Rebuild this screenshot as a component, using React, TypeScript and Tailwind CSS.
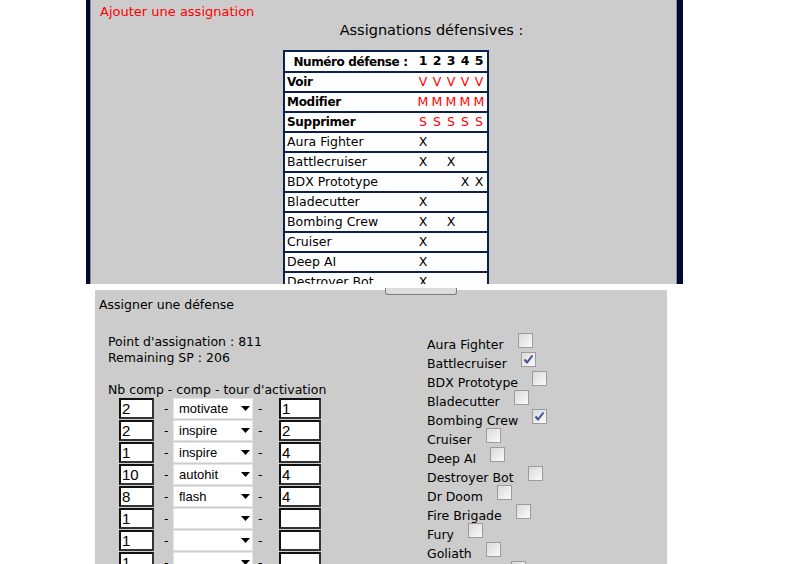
import React from "react";

const NAVY = "border-[#0b2250]";

type Row = { label: string; bold?: boolean; marks: string[]; red?: boolean };

const tableRows: Row[] = [
  { label: "Voir", bold: true, red: true, marks: ["V", "V", "V", "V", "V"] },
  { label: "Modifier", bold: true, red: true, marks: ["M", "M", "M", "M", "M"] },
  { label: "Supprimer", bold: true, red: true, marks: ["S", "S", "S", "S", "S"] },
  { label: "Aura Fighter", marks: ["X", "", "", "", ""] },
  { label: "Battlecruiser", marks: ["X", "", "X", "", ""] },
  { label: "BDX Prototype", marks: ["", "", "", "X", "X"] },
  { label: "Bladecutter", marks: ["X", "", "", "", ""] },
  { label: "Bombing Crew", marks: ["X", "", "X", "", ""] },
  { label: "Cruiser", marks: ["X", "", "", "", ""] },
  { label: "Deep AI", marks: ["X", "", "", "", ""] },
  { label: "Destroyer Bot", marks: ["X", "", "", "", ""] },
  { label: "Dr Doom", marks: ["X", "", "", "", ""] },
];

const compRows = [
  ["2", "motivate", "1"],
  ["2", "inspire", "2"],
  ["1", "inspire", "4"],
  ["10", "autohit", "4"],
  ["8", "flash", "4"],
  ["1", "", ""],
  ["1", "", ""],
  ["1", "", ""],
];

const units: [string, boolean][] = [
  ["Aura Fighter", false],
  ["Battlecruiser", true],
  ["BDX Prototype", false],
  ["Bladecutter", false],
  ["Bombing Crew", true],
  ["Cruiser", false],
  ["Deep AI", false],
  ["Destroyer Bot", false],
  ["Dr Doom", false],
  ["Fire Brigade", false],
  ["Fury", false],
  ["Goliath", false],
  ["Guardian X", false],
];

function Box({ checked }: { checked: boolean }) {
  return (
    <span className="ml-[14px] mt-[2px] flex h-[15px] w-[15px] shrink-0 items-center justify-center border border-[#9c9c9c] bg-linear-to-br from-[#d9d9d9] to-[#fbfbfb]">
      {checked && (
        <svg width="11" height="11" viewBox="0 0 11 11">
          <path d="M1.5 5.5 L4 8.5 L9.5 1.5" fill="none" stroke="#3c4f92" strokeWidth="2" />
        </svg>
      )}
    </span>
  );
}

function Field({ value, w }: { value: string; w: string }) {
  return (
    <div
      className={`${w} h-[21px] border-2 border-t-[#111] border-l-[#111] border-r-[#333] border-b-[#333] bg-white pl-[1px] font-['Liberation_Sans',sans-serif] text-[15px] leading-[17px] text-black`}
    >
      {value}
    </div>
  );
}

export default function App() {
  return (
    <div className="relative h-[564px] w-[795px] overflow-hidden bg-white font-['DejaVu_Sans',sans-serif] text-[12.5px] text-black">
      {/* Top panel */}
      <div className="ml-[86px] h-[284px] w-[597px] overflow-hidden border-l-[4px] border-r-[6px] border-[#000a30] bg-[#cccccc]">
        <div className="h-full border-x border-[#8a8a8a]">
          <div className="pl-[9px] pt-[4px] text-[13px] leading-[16px] text-[#ff0000]">Ajouter une assignation</div>
          <div className="mt-[1px] flex justify-center pl-[96px] text-[14.5px] leading-[18px]">Assignations défensives :</div>
          <div className={`ml-[192px] mt-[11px] w-[206px] border-2 ${NAVY} bg-white`}>
            <div className="flex h-[19px] items-center font-bold">
              <div className="w-[131px] text-center text-[12px] tracking-[-0.4px]">Numéro défense :</div>
              {["1", "2", "3", "4", "5"].map((n) => (
                <div key={n} className="w-[14px] text-center text-[12.5px]">
                  {n}
                </div>
              ))}
            </div>
            {tableRows.map((r) => (
              <div key={r.label} className={`flex h-[20px] items-center border-t-2 ${NAVY}`}>
                <div
                  className={
                    r.bold
                      ? "w-[131px] pl-[2px] text-[12px] font-bold tracking-[-0.3px]"
                      : "w-[131px] pl-[2px]"
                  }
                >
                  {r.label}
                </div>
                {r.marks.map((m, i) => (
                  <div key={i} className={r.red ? "w-[14px] text-center text-[#ff0000]" : "w-[14px] text-center"}>
                    {m}
                  </div>
                ))}
              </div>
            ))}
          </div>
        </div>
      </div>

      {/* Bottom panel */}
      <div className="ml-[95px] mt-[6px] h-[274px] w-[572px] overflow-hidden bg-[#cccccc] leading-[16px]">
        <div className="pl-[4px] pt-[7px]">Assigner une défense</div>
        <div className="flex items-start">
          <div className="ml-[13px] mt-[21px] w-[319px] shrink-0">
            <div>Point d'assignation : 811</div>
            <div>Remaining SP : 206</div>
            <div className="mt-[16px]">Nb comp - comp - tour d'activation</div>
            <div className="flex flex-col gap-[1px]">
              {compRows.map((r, i) => (
                <div key={i} className="flex h-[21px] items-center">
                  <div className="ml-[11px]">
                    <Field value={r[0]} w="w-[35px]" />
                  </div>
                  <div className="w-[19px] pl-[10px]">-</div>
                  <div className="relative h-[21px] w-[80px] border border-[#e4e4e4] bg-white pl-[5px] font-['Liberation_Sans',sans-serif] text-[13px] leading-[19px]">
                    {r[1]}
                    <svg className="absolute right-[2px] top-[7px]" width="9" height="5" viewBox="0 0 9 5">
                      <path d="M0 0 H9 L4.5 5 Z" fill="#000" />
                    </svg>
                  </div>
                  <div className="w-[26px] pl-[5px]">-</div>
                  <Field value={r[2]} w="w-[42px]" />
                </div>
              ))}
            </div>
          </div>
          <div className="mt-[18px]">
            {units.map(([u, c]) => (
              <div key={u} className="flex h-[19px] items-start">
                <span className="mt-[6px] leading-[16px]">{u}</span>
                <Box checked={c} />
              </div>
            ))}
          </div>
        </div>
      </div>

      {/* overlapping button edge */}
      <div className="absolute left-[385px] top-[288px] h-[7px] w-[72px] rounded-b-[3px] border border-t-0 border-[#7c7c7c] bg-[#dcdcdc]" />
    </div>
  );
}
